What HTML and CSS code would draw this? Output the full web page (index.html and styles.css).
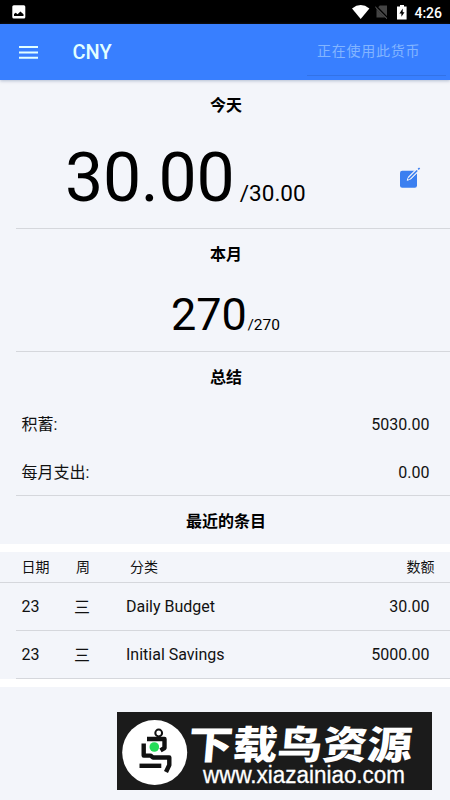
FILE: index.html
```html
<!DOCTYPE html>
<html lang="zh-CN">
<head>
<meta charset="utf-8">
<meta name="viewport" content="width=device-width, initial-scale=1">
<title>CNY</title>
<link rel="stylesheet" href="styles.css">
</head>
<body>
<div class="statusbar">
  <svg class="status-photo" width="14" height="14" viewBox="0 0 14 14"><rect x=".3" y=".3" width="13" height="13.2" rx="1.5" fill="#fff"/><path d="M2 11V9L3.7 7.8 5.6 9.2 8.4 6.5 11.5 9.2V11Z" fill="#000"/></svg>
  <svg class="status-wifi" width="18" height="14" viewBox="0 0 18 14"><path d="M0 3.4Q8.7-3.2 17.4 3.4L8.7 14Z" fill="#fff"/></svg>
  <svg class="status-sim" width="14" height="14" viewBox="0 0 14 14"><path d="M4.8.5H12V12.5H1.5V4Z" fill="#444"/><path d="M.5 1.2 12.5 13.3" stroke="#000" stroke-width="2.4"/><path d="M.4 2 12 13.6" stroke="#777" stroke-width="1"/></svg>
  <svg class="status-battery" width="10" height="15" viewBox="0 0 10 15"><path d="M3 0H7V1.5H9.6V14.5H0V1.5H3Z" fill="#fff"/><path d="M5.7 3.5 2.4 8.5H4.4V11.8L7.5 7.2H5.7Z" fill="#000"/></svg>
  <span class="clock">4:26</span>
</div>
<header class="appbar">
  <svg class="menu" width="19" height="13" viewBox="0 0 19 13"><path d="M0 1.1H19M0 6.4H19M0 11.7H19" stroke="#e2ffff" stroke-width="2"/></svg>
  <h1>CNY</h1>
  <div class="currency">正在使用此货币</div>
</header>
<main>
  <section class="today">
    <h2>今天</h2>
    <div class="amount-row">
      <div class="daily"><span class="daily-left">30.00</span><span class="daily-total">/30.00</span></div>
      <svg class="edit" width="22" height="22" viewBox="0 0 22 22"><rect x="1" y="3.8" width="17" height="17" rx="2.2" fill="#3b7ff0"/><path d="M8.2 13.3 9.6 9.8 17 2.4 19.2 4.6 11.7 12.1Z" fill="#f3f5fa" stroke="#f3f5fa" stroke-width="1" stroke-linejoin="round"/><path d="M9.4 12.3 18.2 3.5M19.2 2.4 20.6 1" stroke="#3b7ff0" stroke-width="1.6"/></svg>
    </div>
  </section>
  <section class="month">
    <h2>本月</h2>
    <div class="monthly"><span class="month-left">270</span><span class="month-total">/270</span></div>
  </section>
  <section class="summary">
    <h2>总结</h2>
    <div class="summary-row"><span>积蓄:</span><span>5030.00</span></div>
    <div class="summary-row expense"><span>每月支出:</span><span>0.00</span></div>
  </section>
  <h2 class="recent-title">最近的条目</h2>
  <section class="entries">
    <div class="entry heading"><span>日期</span><span>周</span><span>分类</span><span>数额</span></div>
    <div class="entry"><span>23</span><span class="weekday">三</span><span>Daily Budget</span><span>30.00</span></div>
    <div class="entry"><span>23</span><span class="weekday">三</span><span>Initial Savings</span><span>5000.00</span></div>
  </section>
</main>
<footer>
  <svg class="banner" width="315" height="78" viewBox="0 0 315 78">
    <rect width="315" height="78" fill="#1b1b1b"/>
    <circle cx="37.7" cy="40.5" r="32.5" fill="#fff"/>
    <g fill="none" stroke="#111" stroke-width="4.4" stroke-linejoin="round">
      <path d="M30 27H47.5V36L43.5 38.3"/>
      <path d="M26.7 31.5V43.6H33.5L36 45.5H52.3V53L49 60"/>
      <path d="M22.5 53.8H44.3"/>
      <circle cx="41.7" cy="21" r="3.4" stroke-width="2"/>
    </g>
    <circle cx="37.3" cy="35" r="4.8" fill="#24dc58"/>
    <text class="banner-name" transform="translate(70 46.6) skewX(-5)" textLength="224" lengthAdjust="spacingAndGlyphs">下载鸟资源</text>
    <text class="banner-url" x="86" y="70.5" textLength="202" lengthAdjust="spacingAndGlyphs">www.xiazainiao.com</text>
  </svg>
</footer>
</body>
</html>
```

FILE: styles.css
```css
* { box-sizing: border-box; }
body {
  margin: 0;
  height: 800px;
  display: flex;
  flex-direction: column;
  overflow: hidden;
  background: #f3f5fa;
  color: #111;
  font-family: Roboto, "Noto Sans CJK SC", sans-serif;
  font-size: 16px;
}
svg { display: block; flex: none; }
h1, h2 { margin: 0; }
.statusbar {
  height: 24px;
  flex: none;
  display: flex;
  align-items: center;
  padding: 0 8px 0 12px;
  background: #000;
  color: #fff;
}
.status-wifi { margin-left: auto; }
.status-sim { margin-left: 5px; }
.status-battery { margin-left: 8px; }
.clock { margin-left: 7px; font-size: 14px; font-weight: 500; line-height: 24px; padding-top: 1px; }
.appbar {
  height: 56px;
  flex: none;
  display: flex;
  align-items: center;
  padding: 0 4px 0 19px;
  background: #387fff;
  box-shadow: 0 1px 3px #7688aa80;
}
.appbar h1 { margin-left: 34.5px; font-size: 20px; font-weight: 500; color: #e2ffff; }
.currency {
  width: 139px;
  height: 48px;
  margin: 0 0 0 auto;
  padding-left: 10px;
  line-height: 46px;
  font-size: 14px;
  letter-spacing: .75px;
  color: #83b5ff;
  border-bottom: 1px solid #3272e7;
}
h2 { height: 50px; line-height: 51px; text-align: center; font-size: 16px; font-weight: 600; color: #000; padding-left: 2px; }
.today, .month, .summary {
  border-bottom: 1px solid #d5d7dc;
  margin-left: 16px;
}
.today h2, .month h2, .summary h2 { margin-left: -16px; }
.today { height: 149px; }
.amount-row { height: 98px; display: flex; justify-content: space-between; padding: 0 29px 0 49px; }
.daily { line-height: 97px; color: #000; white-space: nowrap; }
.daily-left { font-size: 68px; letter-spacing: -.3px; }
.daily-total { font-size: 22.5px; margin-left: 5.5px; }
.edit { margin-top: 37px; }
.month { height: 123px; }
.monthly { line-height: 72px; padding-left: 155px; color: #000; white-space: nowrap; }
.month-left { font-size: 45px; }
.month-total { font-size: 15.5px; margin-left: .5px; }
.summary { height: 144px; }
.summary-row { height: 47px; display: flex; justify-content: space-between; line-height: 46px; padding: 0 20.5px 0 5.5px; }
.expense { line-height: 48px; }
.recent-title { height: 48px; line-height: 52px; }
.entries { background: #f3f5fa; border-top: 8px solid #fff; border-bottom: 8px solid #fff; }
.entry {
  height: 48px;
  display: grid;
  grid-template-columns: 52.5px 52px 1fr auto;
  align-items: center;
  margin-left: 16px;
  padding: 0 20.5px 0 5.5px;
  border-bottom: 1px solid #d5d7dc;
}
.weekday { padding-bottom: 2px; }
.heading { height: 31px; margin-left: 0; padding: 0 15.5px 2px 21.5px; font-size: 14px; grid-template-columns: 54.5px 54px 1fr auto; }
footer { padding: 25px 0 0 117px; }
.banner-name { font: 900 39px "Noto Sans CJK SC", sans-serif; fill: #fff; }
.banner-url { font: 23px "Liberation Sans", sans-serif; fill: #fff; stroke: #fff; stroke-width: .3px; }
```
